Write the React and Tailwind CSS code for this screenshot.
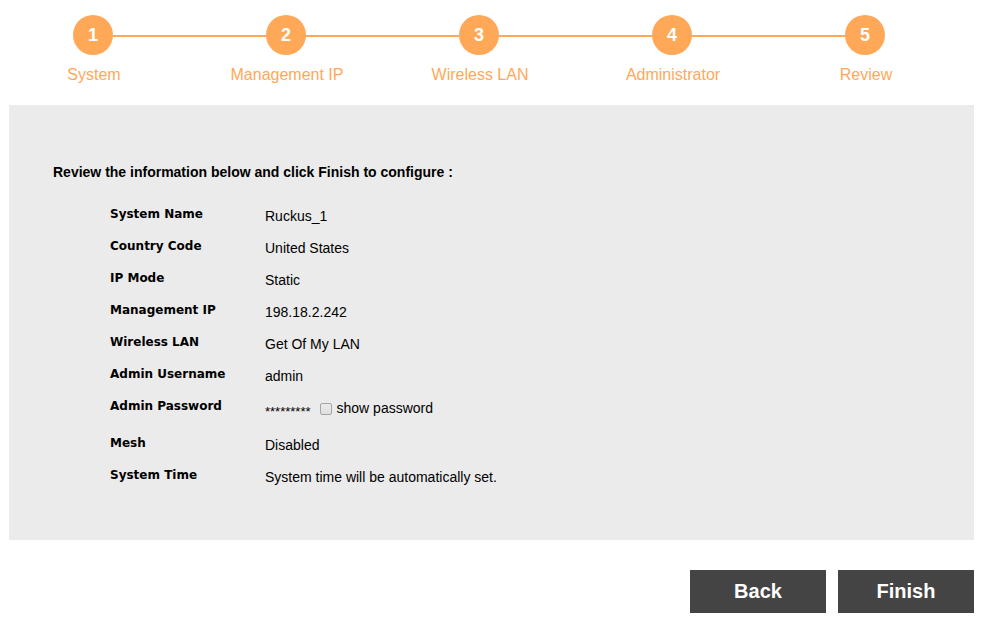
import { useState } from "react";

const steps = ["System", "Management IP", "Wireless LAN", "Administrator", "Review"];

function Steps() {
  return (
    <ol className="ml-16 mr-[89px] flex">
      {steps.map((step, i) => (
        <li key={step} className="flex-1 last:flex-none">
          <div className="flex items-center">
            <span className="flex size-10 flex-none items-center justify-center rounded-full bg-[#ffa858] text-lg font-bold text-white">
              {i + 1}
            </span>
            {i < steps.length - 1 && <span className="mt-0.5 h-0.5 flex-1 bg-[#ffa858]" />}
          </div>
          <div className="mt-2 flex w-10 justify-center whitespace-nowrap pl-0.5 text-base text-[#ffa858]">
            {step}
          </div>
        </li>
      ))}
    </ol>
  );
}

function Row({ label, children }) {
  return (
    <div className="flex min-h-8 items-start">
      <dt className="w-[155px] flex-none font-['DejaVu_Sans',sans-serif] text-[12px] leading-4 font-bold">
        {label}
      </dt>
      <dd className="pt-0.5 text-sm leading-4">{children}</dd>
    </div>
  );
}

export default function App() {
  const [shown, setShown] = useState(false);
  return (
    <main className="bg-white pt-[15px] pr-[14px] pb-[6px] pl-[9px] font-['Liberation_Sans',Arial,sans-serif] text-black">
      <Steps />
      <section className="mt-[18px] bg-[#ebebeb] px-11 pt-[59px] pb-[41px]">
        <h1 className="text-sm leading-4 font-bold">
          Review the information below and click Finish to configure :
        </h1>
        <dl className="mt-[26px] pl-[57px]">
          <Row label="System Name">Ruckus_1</Row>
          <Row label="Country Code">United States</Row>
          <Row label="IP Mode">Static</Row>
          <Row label="Management IP">198.18.2.242</Row>
          <Row label="Wireless LAN">Get Of My LAN</Row>
          <Row label="Admin Username">admin</Row>
          <Row label="Admin Password">
            <div className="flex h-[35px] items-start">
              <span className="pt-1 text-[13px]">*********</span>
              <label className="ml-[9px] flex items-center gap-[5px]">
                <input
                  type="checkbox"
                  checked={shown}
                  onChange={(e) => setShown(e.target.checked)}
                  className="mt-0.5 size-3 appearance-none rounded-xs border border-[#a6a6a6] bg-linear-to-b from-[#ececec] to-[#dddddd] checked:bg-[#555555] checked:bg-none"
                />
                show password
              </label>
            </div>
          </Row>
          <Row label="Mesh">Disabled</Row>
          <Row label="System Time">System time will be automatically set.</Row>
        </dl>
      </section>
      <div className="mt-[30px] flex justify-end gap-3 text-xl font-bold text-white">
        <button type="button" className="h-[43px] w-[136px] bg-[#444444] pb-0.5">Back</button>
        <button type="button" className="h-[43px] w-[136px] bg-[#444444] pb-0.5">Finish</button>
      </div>
    </main>
  );
}
